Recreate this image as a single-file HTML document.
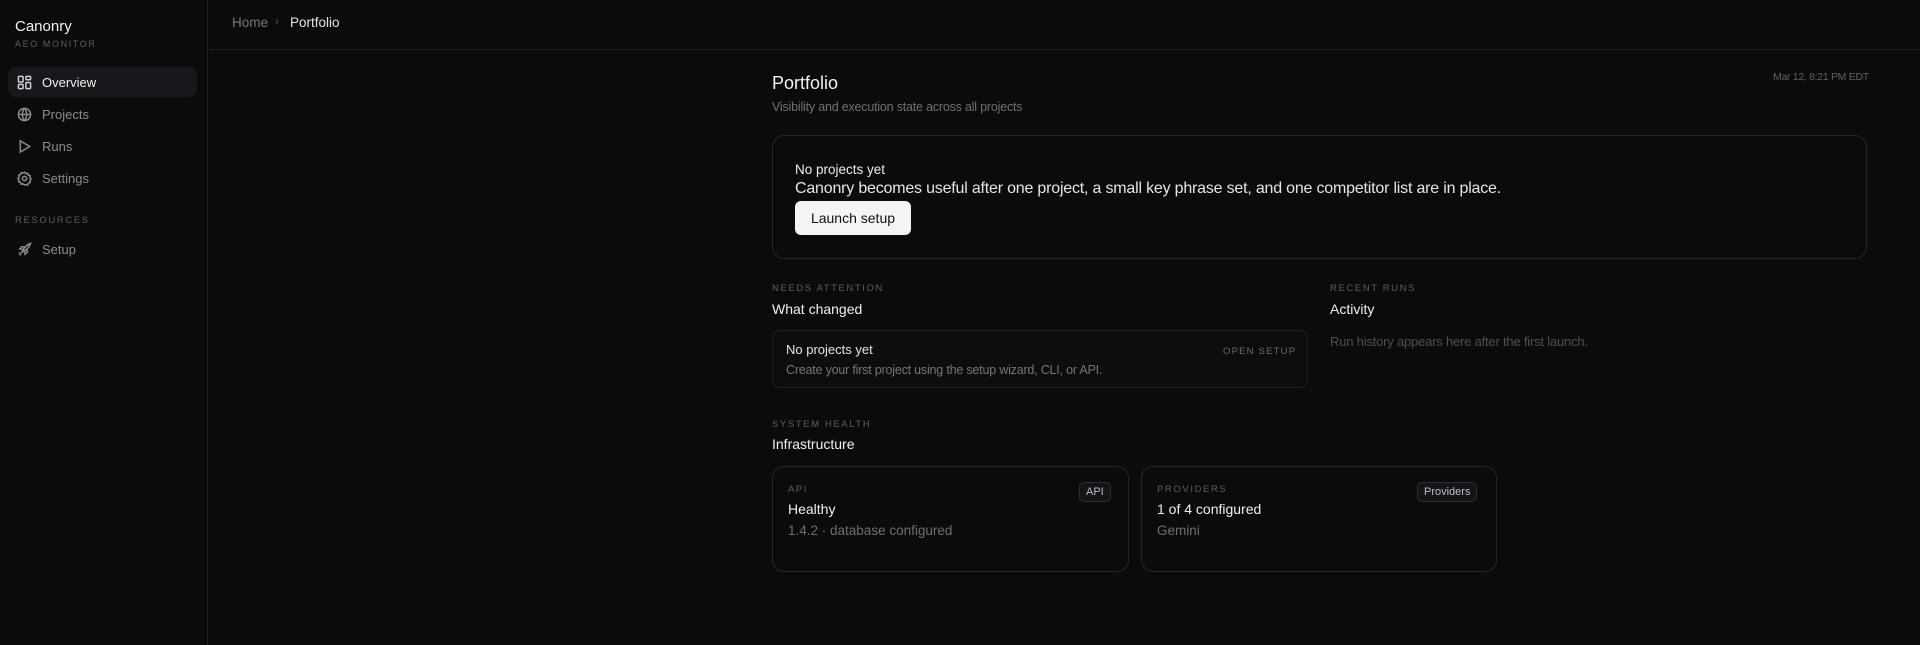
<!DOCTYPE html>
<html><head><meta charset="utf-8"><style>
*{box-sizing:border-box;margin:0;padding:0}
body{width:1920px;height:645px;background:#0a0b0d;color:#e8e8ea;font-family:"Liberation Sans",sans-serif;position:relative;overflow:hidden}
.a{position:absolute;white-space:nowrap}
.side{position:absolute;left:0;top:0;width:208px;height:645px;border-right:1px solid #1c1d20}
.top{position:absolute;left:209px;top:0;right:0;height:50px;border-bottom:1px solid #1c1d20}
.nav{position:absolute;left:8px;width:189px;height:30px;border-radius:8px;font-size:13px;color:#8a8b90;display:flex;align-items:center;padding-left:9px;gap:10px}
.nav svg{width:15px;height:15px;stroke:#8a8b90;fill:none;stroke-width:1.6}
.lbl{font-size:10px;letter-spacing:1.6px;color:#5c5d62}
.box{position:absolute;border:1px solid #26272b;border-radius:12px}
.badge{position:absolute;border:1px solid #2c2d31;background:#141518;border-radius:5px;font-size:11px;color:#bdbec2;padding:3px 6px}
</style></head><body>
<div class="side">
<div class="a" style="left:15px;top:18px;font-size:15px;color:#f2f2f4">Canonry</div>
<div class="a lbl" style="left:15px;top:39px;font-size:9px">AEO MONITOR</div>
<div class="nav" style="top:67px;background:#17181b;color:#f0f0f2"><svg viewBox="0 0 16 16" style="stroke:#d0d0d4"><rect x="1.5" y="1.5" width="5" height="6" rx="1"/><rect x="9.5" y="1.5" width="5" height="3.5" rx="1"/><rect x="1.5" y="10" width="5" height="4.5" rx="1"/><rect x="9.5" y="8" width="5" height="6.5" rx="1"/></svg>Overview</div>
<div class="nav" style="top:99px"><svg viewBox="0 0 16 16"><circle cx="8" cy="8" r="6.5"/><path d="M1.5 8h13M8 1.5c-3 3.5-3 9.5 0 13M8 1.5c3 3.5 3 9.5 0 13"/></svg>Projects</div>
<div class="nav" style="top:131px"><svg viewBox="0 0 16 16"><path d="M3.5 2v12l10-6z"/></svg>Runs</div>
<div class="nav" style="top:163px"><svg viewBox="0 0 16 16"><circle cx="8" cy="8" r="2.3"/><path d="M8 1.2l1.4 1.6 2.1-.4.6 2 2 .7-.4 2.1L15 8.6l-1.3 1.6.4 2.1-2 .6-.7 2-2.1-.4L8 15l-1.6-1.3-2.1.4-.6-2-2-.7.4-2.1L1 8l1.3-1.6-.4-2.1 2-.6.7-2 2.1.4z"/></svg>Settings</div>
<div class="a lbl" style="left:15px;top:215px;font-size:9.5px">RESOURCES</div>
<div class="nav" style="top:234px"><svg viewBox="0 0 16 16"><path d="M5 11c3-6 6-8.5 9.5-9.5C13.5 5 11 8 5 11zM6 7.5H3L5 5h3M8.5 10v3l2.5-2V8M4.5 12.5l-2 1.5M3 11l-1 1"/></svg>Setup</div>
</div>
<div class="top">
<div class="a" style="left:23px;top:15px;font-size:13.5px;color:#77787d">Home</div>
<div class="a" style="left:66px;top:14px;font-size:12px;color:#55565b">›</div>
<div class="a" style="left:81px;top:15px;font-size:13.5px;color:#e4e4e6">Portfolio</div>
</div>
<div class="a" style="left:772px;top:73px;font-size:18px;color:#f2f2f4">Portfolio</div>
<div class="a" style="left:772px;top:100px;font-size:12.5px;color:#6e6f74;letter-spacing:-0.2px">Visibility and execution state across all projects</div>
<div class="a" style="left:1773px;top:71px;font-size:10.5px;color:#5f6065;letter-spacing:-0.3px">Mar 12, 8:21 PM EDT</div>
<div class="box" style="left:772px;top:135px;width:1095px;height:124px"></div>
<div class="a" style="left:795px;top:162px;font-size:13.5px;color:#ededef">No projects yet</div>
<div class="a" style="left:795px;top:180px;font-size:16px;color:#e6e6e8;letter-spacing:-0.2px">Canonry becomes useful after one project, a small key phrase set, and one competitor list are in place.</div>
<div class="a" style="left:795px;top:201px;width:116px;height:34px;background:#f4f4f5;border-radius:6px;color:#111;font-size:14px;display:flex;align-items:center;justify-content:center">Launch setup</div>
<div class="a lbl" style="left:772px;top:283px;font-size:9.5px">NEEDS ATTENTION</div>
<div class="a" style="left:772px;top:301px;font-size:14px;color:#f0f0f2">What changed</div>
<div class="box" style="left:772px;top:330px;width:536px;height:58px;border-radius:8px;border-color:#1d1e21;background:#0c0d0f"></div>
<div class="a" style="left:786px;top:342px;font-size:13px;color:#e6e6e8">No projects yet</div>
<div class="a" style="left:786px;top:363px;font-size:12.5px;color:#74757a;letter-spacing:-0.2px">Create your first project using the setup wizard, CLI, or API.</div>
<div class="a lbl" style="left:1223px;top:346px;font-size:9.5px;color:#6a6b70;letter-spacing:1.2px">OPEN SETUP</div>
<div class="a lbl" style="left:1330px;top:283px;font-size:9.5px">RECENT RUNS</div>
<div class="a" style="left:1330px;top:301px;font-size:14px;color:#f0f0f2">Activity</div>
<div class="a" style="left:1330px;top:334px;font-size:13px;color:#4e4f54;letter-spacing:-0.2px">Run history appears here after the first launch.</div>
<div class="a lbl" style="left:772px;top:419px;font-size:9.5px">SYSTEM HEALTH</div>
<div class="a" style="left:772px;top:436px;font-size:14px;color:#f0f0f2">Infrastructure</div>
<div class="box" style="left:772px;top:466px;width:357px;height:106px"></div>
<div class="a lbl" style="left:788px;top:484px;font-size:9.5px">API</div>
<div class="a" style="left:788px;top:501px;font-size:14px;color:#f0f0f2">Healthy</div>
<div class="a" style="left:788px;top:523px;font-size:13.5px;color:#6e6f74">1.4.2 · database configured</div>
<div class="badge" style="left:1079px;top:482px">API</div>
<div class="box" style="left:1141px;top:466px;width:356px;height:106px"></div>
<div class="a lbl" style="left:1157px;top:484px;font-size:9.5px">PROVIDERS</div>
<div class="a" style="left:1157px;top:501px;font-size:14px;color:#f0f0f2">1 of 4 configured</div>
<div class="a" style="left:1157px;top:523px;font-size:13.5px;color:#6e6f74">Gemini</div>
<div class="badge" style="left:1417px;top:482px">Providers</div>
</body></html>
